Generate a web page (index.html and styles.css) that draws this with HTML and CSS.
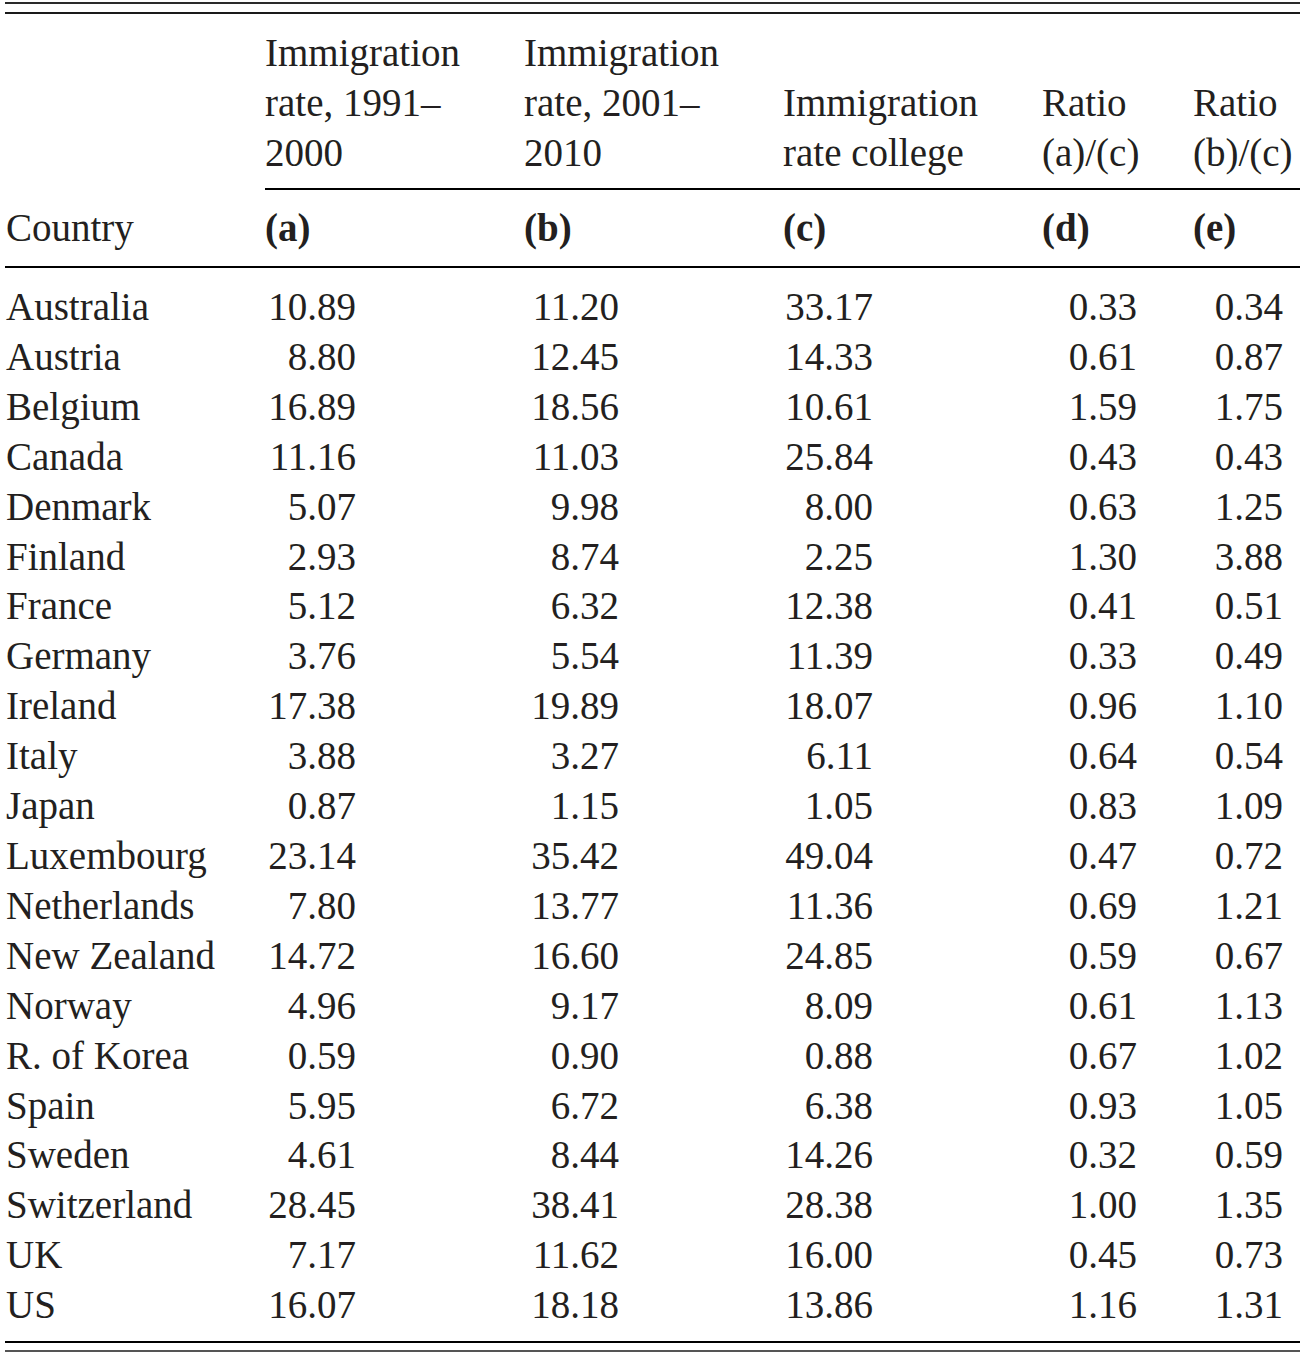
FILE: index.html
```html
<!DOCTYPE html>
<html lang="en">
<head>
<meta charset="utf-8">
<title>Immigration rates</title>
<link rel="stylesheet" href="styles.css">
</head>
<body>
<div class="wrap">
  <div class="rule rule-top1"></div>
  <div class="rule rule-top2"></div>
  <table class="tbl">
    <colgroup>
      <col class="c-country">
      <col class="c-a">
      <col class="c-b">
      <col class="c-c">
      <col class="c-d">
      <col class="c-e">
    </colgroup>
    <thead>
      <tr class="h1">
        <th></th>
        <th class="hc">Immigration<br>rate, 1991–<br>2000</th>
        <th class="hc">Immigration<br>rate, 2001–<br>2010</th>
        <th class="hc">Immigration<br>rate college</th>
        <th class="hc">Ratio<br>(a)/(c)</th>
        <th class="hc">Ratio<br>(b)/(c)</th>
      </tr>
      <tr class="h2">
        <th class="country">Country</th>
        <th class="lbl">(a)</th>
        <th class="lbl">(b)</th>
        <th class="lbl">(c)</th>
        <th class="lbl">(d)</th>
        <th class="lbl">(e)</th>
      </tr>
    </thead>
    <tbody>
      <tr><td>Australia</td><td class="na"><span>10.89</span></td><td class="nb"><span>11.20</span></td><td class="nc"><span>33.17</span></td><td class="nd"><span>0.33</span></td><td class="ne"><span>0.34</span></td></tr>
      <tr><td>Austria</td><td class="na"><span>8.80</span></td><td class="nb"><span>12.45</span></td><td class="nc"><span>14.33</span></td><td class="nd"><span>0.61</span></td><td class="ne"><span>0.87</span></td></tr>
      <tr><td>Belgium</td><td class="na"><span>16.89</span></td><td class="nb"><span>18.56</span></td><td class="nc"><span>10.61</span></td><td class="nd"><span>1.59</span></td><td class="ne"><span>1.75</span></td></tr>
      <tr><td>Canada</td><td class="na"><span>11.16</span></td><td class="nb"><span>11.03</span></td><td class="nc"><span>25.84</span></td><td class="nd"><span>0.43</span></td><td class="ne"><span>0.43</span></td></tr>
      <tr><td>Denmark</td><td class="na"><span>5.07</span></td><td class="nb"><span>9.98</span></td><td class="nc"><span>8.00</span></td><td class="nd"><span>0.63</span></td><td class="ne"><span>1.25</span></td></tr>
      <tr><td>Finland</td><td class="na"><span>2.93</span></td><td class="nb"><span>8.74</span></td><td class="nc"><span>2.25</span></td><td class="nd"><span>1.30</span></td><td class="ne"><span>3.88</span></td></tr>
      <tr><td>France</td><td class="na"><span>5.12</span></td><td class="nb"><span>6.32</span></td><td class="nc"><span>12.38</span></td><td class="nd"><span>0.41</span></td><td class="ne"><span>0.51</span></td></tr>
      <tr><td>Germany</td><td class="na"><span>3.76</span></td><td class="nb"><span>5.54</span></td><td class="nc"><span>11.39</span></td><td class="nd"><span>0.33</span></td><td class="ne"><span>0.49</span></td></tr>
      <tr><td>Ireland</td><td class="na"><span>17.38</span></td><td class="nb"><span>19.89</span></td><td class="nc"><span>18.07</span></td><td class="nd"><span>0.96</span></td><td class="ne"><span>1.10</span></td></tr>
      <tr><td>Italy</td><td class="na"><span>3.88</span></td><td class="nb"><span>3.27</span></td><td class="nc"><span>6.11</span></td><td class="nd"><span>0.64</span></td><td class="ne"><span>0.54</span></td></tr>
      <tr><td>Japan</td><td class="na"><span>0.87</span></td><td class="nb"><span>1.15</span></td><td class="nc"><span>1.05</span></td><td class="nd"><span>0.83</span></td><td class="ne"><span>1.09</span></td></tr>
      <tr><td>Luxembourg</td><td class="na"><span>23.14</span></td><td class="nb"><span>35.42</span></td><td class="nc"><span>49.04</span></td><td class="nd"><span>0.47</span></td><td class="ne"><span>0.72</span></td></tr>
      <tr><td>Netherlands</td><td class="na"><span>7.80</span></td><td class="nb"><span>13.77</span></td><td class="nc"><span>11.36</span></td><td class="nd"><span>0.69</span></td><td class="ne"><span>1.21</span></td></tr>
      <tr><td>New Zealand</td><td class="na"><span>14.72</span></td><td class="nb"><span>16.60</span></td><td class="nc"><span>24.85</span></td><td class="nd"><span>0.59</span></td><td class="ne"><span>0.67</span></td></tr>
      <tr><td>Norway</td><td class="na"><span>4.96</span></td><td class="nb"><span>9.17</span></td><td class="nc"><span>8.09</span></td><td class="nd"><span>0.61</span></td><td class="ne"><span>1.13</span></td></tr>
      <tr><td>R. of Korea</td><td class="na"><span>0.59</span></td><td class="nb"><span>0.90</span></td><td class="nc"><span>0.88</span></td><td class="nd"><span>0.67</span></td><td class="ne"><span>1.02</span></td></tr>
      <tr><td>Spain</td><td class="na"><span>5.95</span></td><td class="nb"><span>6.72</span></td><td class="nc"><span>6.38</span></td><td class="nd"><span>0.93</span></td><td class="ne"><span>1.05</span></td></tr>
      <tr><td>Sweden</td><td class="na"><span>4.61</span></td><td class="nb"><span>8.44</span></td><td class="nc"><span>14.26</span></td><td class="nd"><span>0.32</span></td><td class="ne"><span>0.59</span></td></tr>
      <tr><td>Switzerland</td><td class="na"><span>28.45</span></td><td class="nb"><span>38.41</span></td><td class="nc"><span>28.38</span></td><td class="nd"><span>1.00</span></td><td class="ne"><span>1.35</span></td></tr>
      <tr><td>UK</td><td class="na"><span>7.17</span></td><td class="nb"><span>11.62</span></td><td class="nc"><span>16.00</span></td><td class="nd"><span>0.45</span></td><td class="ne"><span>0.73</span></td></tr>
      <tr class="last"><td>US</td><td class="na"><span>16.07</span></td><td class="nb"><span>18.18</span></td><td class="nc"><span>13.86</span></td><td class="nd"><span>1.16</span></td><td class="ne"><span>1.31</span></td></tr>
    </tbody>
  </table>
  <div class="rule rule-bot1"></div>
  <div class="rule rule-bot2"></div>
</div>
</body>
</html>
```

FILE: styles.css
```css
html, body {
  margin: 0;
  padding: 0;
  background: #ffffff;
}

body {
  font-family: "Liberation Serif", "Times New Roman", serif;
  font-size: 39px;
  color: #231f20;
}

.wrap {
  width: 1295px;
  margin-left: 5px;
  padding-top: 2px;
}

.rule {
  height: 2px;
  background: #1a1a1a;
}

.rule-top1 {
  background: #2a2a2a;
}

.rule-top2 {
  margin-top: 8px;
  background: #1a1a1a;
}

.rule-bot1 {
  background: #000000;
}

.rule-bot2 {
  margin-top: 7px;
  background: #555555;
}

.tbl {
  width: 1295px;
  border-collapse: collapse;
  table-layout: fixed;
  line-height: 50px;
}

.c-country { width: 260px; }
.c-a { width: 259px; }
.c-b { width: 259px; }
.c-c { width: 259px; }
.c-d { width: 151px; }
.c-e { width: 107px; }

.tbl th,
.tbl td {
  padding: 0;
  text-align: left;
  font-weight: normal;
  white-space: nowrap;
}

.h1 th {
  vertical-align: bottom;
  padding-top: 14px;
  padding-bottom: 10px;
}

.h1 th.hc {
  border-bottom: 2px solid #000000;
}

.h2 th {
  padding-top: 13px;
  padding-bottom: 13px;
  border-bottom: 2px solid #000000;
}

.h2 th.country {
  padding-left: 1px;
}

.h2 th.lbl {
  font-weight: bold;
}

.tbl tbody td {
  line-height: 49.9px;
}

.tbl tbody td:first-child {
  padding-left: 1px;
}

.tbl tbody tr:first-child td {
  padding-top: 14px;
}

.tbl tbody tr.last td {
  padding-bottom: 11px;
}

.tbl td span {
  display: inline-block;
  text-align: right;
}

.na span { width: 91px; }
.nb span { width: 95px; }
.nc span { width: 90px; }
.nd span { width: 95px; }
.ne span { width: 90px; }
```
